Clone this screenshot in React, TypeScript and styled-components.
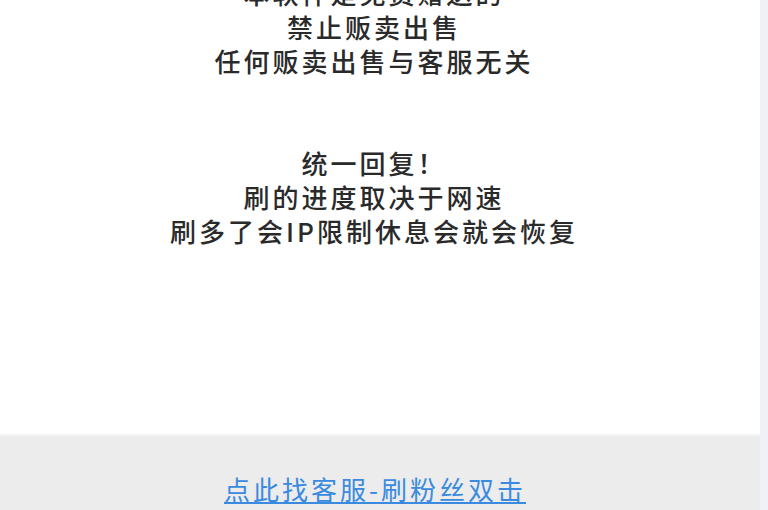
import { FC } from "react";
import styled, { createGlobalStyle } from "styled-components";

const GlobalStyle = createGlobalStyle`
  html, body {
    margin: 0;
    padding: 0;
    height: 100%;
    overflow: hidden;
    background: #ffffff;
  }
  #root {
    height: 100%;
  }
`;

const notice: string[] = [
  "本软件是免费赠送的",
  "禁止贩卖出售",
  "任何贩卖出售与客服无关",
  "",
  "",
  "统一回复！",
  "刷的进度取决于网速",
  "刷多了会IP限制休息会就会恢复",
];

const App: FC = () => {
  return (
    <>
      <GlobalStyle />
      <Page>
        <Main>
          <Content>
            <Notice>
              {notice.map((line, i) => (
                <Line key={i}>{line || "\u00a0"}</Line>
              ))}
            </Notice>
          </Content>
          <Footer>
            <ServiceLink href="#">点此找客服-刷粉丝双击</ServiceLink>
          </Footer>
        </Main>
        <ScrollTrack />
      </Page>
    </>
  );
};

export default App;

const Page = styled.div`
  display: flex;
  width: 768px;
  height: 510px;
  font-family: "Noto Sans CJK SC", "Noto Sans", sans-serif;
`;

const Main = styled.div`
  flex: 1;
  display: flex;
  flex-direction: column;
  min-width: 0;
`;

const Content = styled.div`
  flex: 1;
  background-color: #ffffff;
  overflow: hidden;
`;

const Notice = styled.div`
  margin-top: -24px;
  padding-right: 12px;
  text-align: center;
  color: #2a2a2a;
  font-size: 26px;
  font-weight: 500;
  letter-spacing: 3px;
  line-height: 34px;
`;

const Line = styled.div`
  white-space: nowrap;
`;

const Footer = styled.div`
  height: 76px;
  background-color: #ececec;
  border-top: 2px solid #f4f4f4;
  display: flex;
  justify-content: center;
  align-items: flex-end;
  padding-right: 10px;
  padding-bottom: 4px;
  box-sizing: border-box;
`;

const ServiceLink = styled.a`
  color: #3a8be0;
  font-size: 26px;
  letter-spacing: 3px;
  line-height: 34px;
  text-decoration: underline;
`;

const ScrollTrack = styled.div`
  width: 8px;
  background-color: #f0f1f6;
`;
